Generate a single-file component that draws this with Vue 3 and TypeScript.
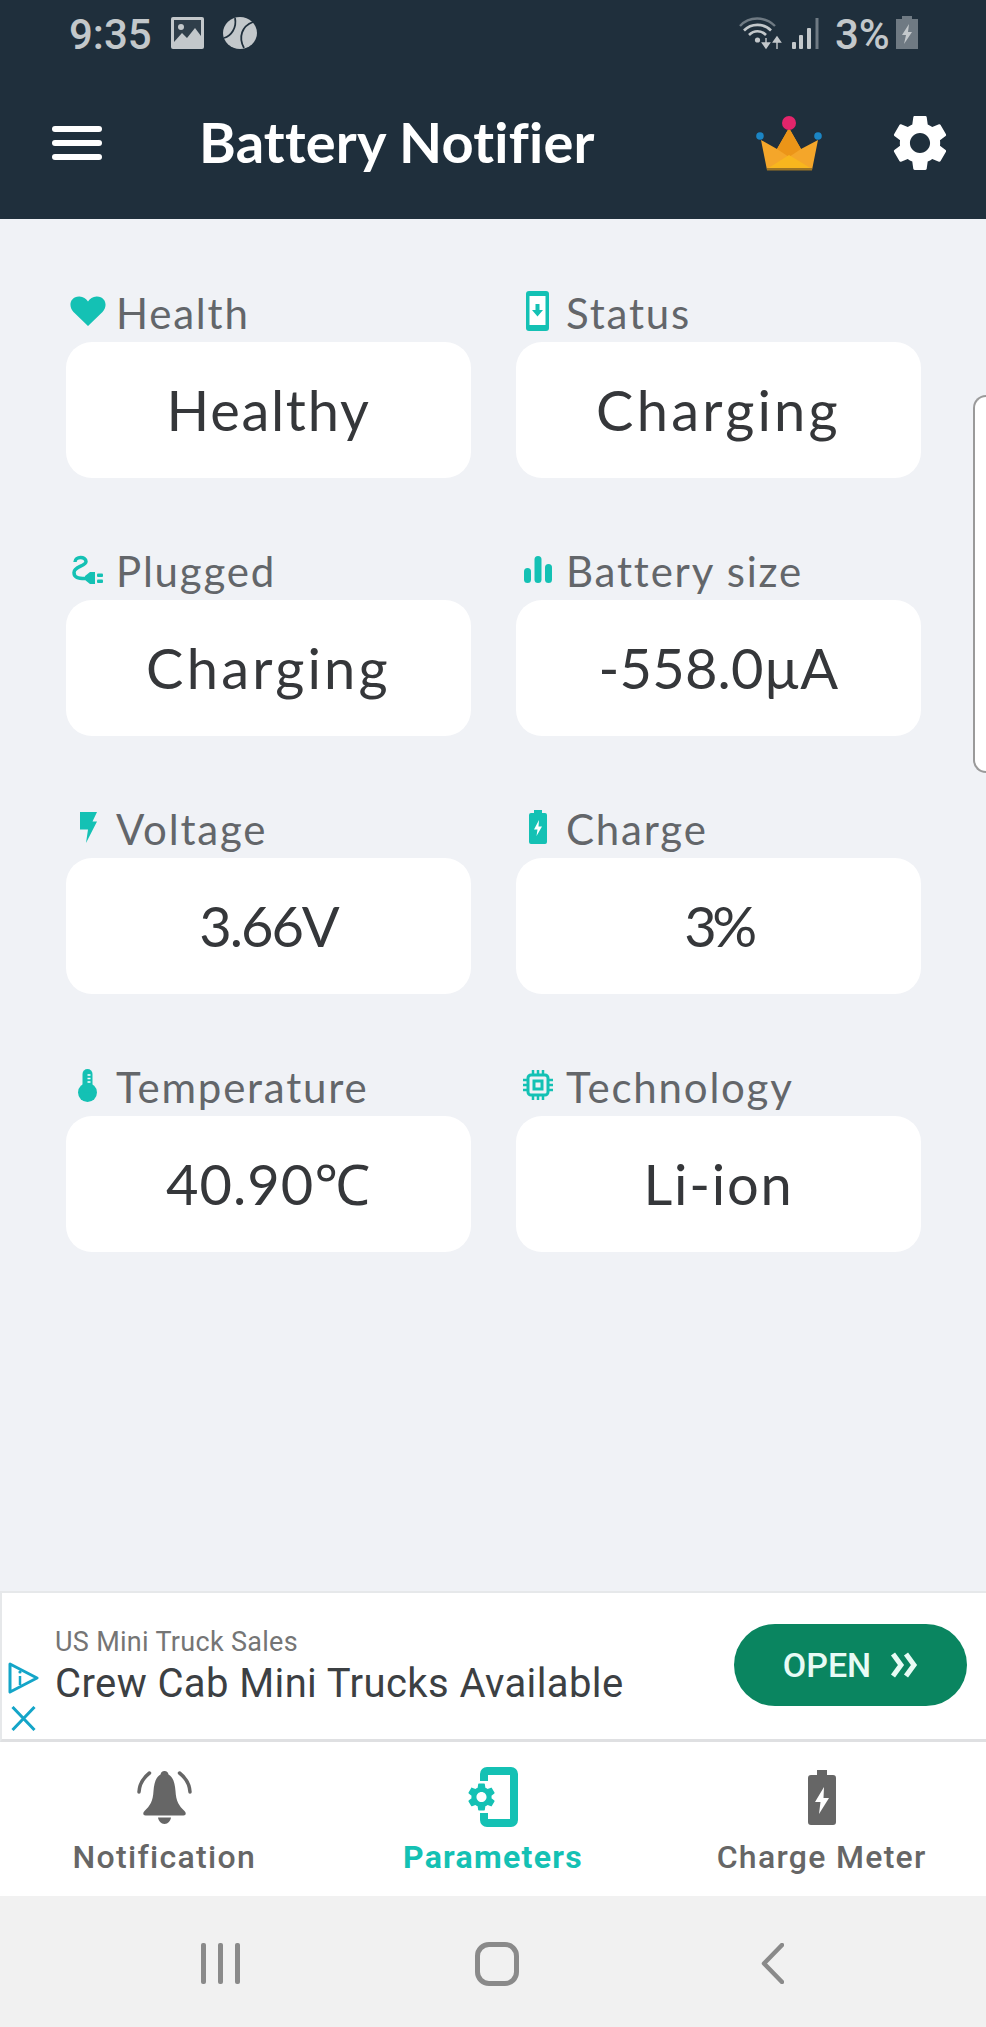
<script setup lang="ts">
interface Stat { key: string; label: string; value: string; track: number }
const stats: Stat[] = [
  { key: 'heart', label: 'Health', value: 'Healthy', track: 1.7 },
  { key: 'status', label: 'Status', value: 'Charging', track: 3.2 },
  { key: 'plug', label: 'Plugged', value: 'Charging', track: 3.2 },
  { key: 'bars', label: 'Battery size', value: '-558.0µA', track: 0.2 },
  { key: 'bolt', label: 'Voltage', value: '3.66V', track: -2 },
  { key: 'battery', label: 'Charge', value: '3%', track: -4.5 },
  { key: 'thermo', label: 'Temperature', value: '40.90℃', track: 1 },
  { key: 'chip', label: 'Technology', value: 'Li-ion', track: 1.8 },
]
const gear = 'M19.14 12.94c.04-.3.06-.61.06-.94 0-.32-.02-.64-.07-.94l2.03-1.58a.49.49 0 0 0 .12-.61l-1.92-3.32a.488.488 0 0 0-.59-.22l-2.39.96c-.5-.38-1.03-.7-1.62-.94l-.36-2.54a.484.484 0 0 0-.48-.41h-3.84c-.24 0-.43.17-.47.41l-.36 2.54c-.59.24-1.13.57-1.62.94l-2.39-.96c-.22-.08-.47 0-.59.22L2.74 8.87c-.12.21-.08.47.12.61l2.03 1.58c-.05.3-.09.63-.09.94s.02.64.07.94l-2.03 1.58a.49.49 0 0 0-.12.61l1.92 3.32c.12.22.37.29.59.22l2.39-.96c.5.38 1.03.7 1.62.94l.36 2.54c.05.24.24.41.48.41h3.84c.24 0 .44-.17.47-.41l.36-2.54c.59-.24 1.13-.56 1.62-.94l2.39.96c.22.08.47 0 .59-.22l1.92-3.32c.12-.22.07-.47-.12-.61l-2.01-1.58zM12 15.6c-1.98 0-3.6-1.62-3.6-3.6s1.62-3.6 3.6-3.6 3.6 1.62 3.6 3.6-1.62 3.6-3.6 3.6z'
</script>

<template>
  <div class="page">
    <header class="top">
      <div class="status">
        <div class="status-left">
          <span class="time">9:35</span>
          <svg class="s-img" width="33" height="32" viewBox="0 0 33 32">
            <rect width="33" height="32" rx="2" fill="#c3c8cb" />
            <path d="M3 25 L11 16 L16 21 L24 11 L30 19 V3 H3Z" fill="#1f2f3c" opacity=".9" />
            <circle cx="10" cy="10" r="3" fill="#c3c8cb" />
          </svg>
          <svg class="s-ball" width="34" height="32" viewBox="0 0 34 32">
            <ellipse cx="17" cy="16" rx="17" ry="16" fill="#c3c8cb" />
            <path d="M12 1 C14 11 8 19 1 21 M30 5 C19 9 15 20 21 31" fill="none" stroke="#1f2f3c" stroke-width="1.8" />
          </svg>
        </div>
        <div class="status-right">
          <svg class="s-wifi" width="43" height="33" viewBox="0 0 43 33">
            <path d="M1 9 C10 -1 26 -1 36 9" fill="none" stroke="#6f7a83" stroke-width="2.4" />
            <path d="M5 13.5 C12 6 25 6 32 13.5 M10 18 C15 13 22 13 27 18" fill="none" stroke="#c3c8cb" stroke-width="2.6" />
            <circle cx="18.5" cy="23" r="2.6" fill="#c3c8cb" />
            <path d="M27 21v8M23.5 26l3.5 5 3.5-5Z" fill="#c3c8cb" stroke="#c3c8cb" stroke-width="1.4" />
            <path d="M38 32v-9M34.5 25l3.5-5 3.5 5Z" fill="#c3c8cb" stroke="#c3c8cb" stroke-width="1.4" />
          </svg>
          <svg class="s-signal" width="27" height="31" viewBox="0 0 27 31">
            <rect x="0" y="24" width="4" height="7" rx="1" fill="#c3c8cb" />
            <rect x="7" y="17" width="4" height="14" rx="1" fill="#c3c8cb" />
            <rect x="15" y="10" width="4" height="21" rx="1" fill="#c3c8cb" />
            <rect x="23.5" y="0" width="3" height="31" fill="#6f7a83" />
          </svg>
          <span class="pct">3%</span>
          <svg class="s-batt" width="22" height="33" viewBox="0 0 22 33">
            <path d="M6 0H16V3H22V33H0V3H6Z" fill="#6f7a83" />
            <path d="M13 8 L6 19 H10 L8 28 L16 16 H12 Z" fill="#c3c8cb" />
          </svg>
        </div>
      </div>
      <div class="toolbar">
        <div class="burger"><i></i><i></i><i></i></div>
        <h1 class="title">Battery Notifier</h1>
        <svg class="crown" width="66" height="55" viewBox="0 0 66 55">
          <path d="M5 24 L21 33 L33 12 L45 33 L62 24 L56 54 H11Z" fill="#f4a62a" />
          <path d="M33 12 L45 33 L33 41 L21 33Z" fill="#ec9518" />
          <path d="M11 53 L33 39 L56 53Z" fill="#f8b61e" />
          <rect x="11" y="52" width="45" height="2.5" fill="#9c7424" />
          <circle cx="33" cy="7" r="7" fill="#e3256b" />
          <circle cx="4" cy="20" r="3.8" fill="#1b85c4" />
          <circle cx="62" cy="20" r="3.8" fill="#1b85c4" />
        </svg>
        <svg class="gear" width="54" height="56" viewBox="2.6 2 18.8 20"><path :d="gear" fill="#fff" /></svg>
      </div>
    </header>

    <main class="main">
      <section v-for="s in stats" :key="s.label" class="stat">
        <div class="label">
          <span class="ico">
            <svg v-if="s.key === 'heart'" width="36" height="30" viewBox="0 0 36 30"><path d="M18 30 L3.5 16 C-2 10 0 1 9 0.5 C13 0.3 16 2.5 18 5.5 C20 2.5 23 0.3 27 0.5 C36 1 38 10 32.500 16 Z" fill="#14c1b4" /></svg>
            <svg v-else-if="s.key === 'status'" width="23" height="40" viewBox="0 0 23 40"><rect width="23" height="40" rx="3" fill="#14c1b4" /><rect x="3.500" y="5" width="16" height="29" fill="#fff" /><path d="M9.500 13h4v6h3.500l-5.500 6.500-5.500-6.500h3.500z" fill="#14c1b4" /></svg>
            <svg v-else-if="s.key === 'plug'" width="32" height="29" viewBox="0 0 32 29"><path d="M3 7 C3 1 14 1 14 6.500 C14 11.500 2 11 2 17.500 C2 22.500 6 23.500 13 23.500" fill="none" stroke="#14c1b4" stroke-width="3.500" /><path d="M13 21 L18 17 H23 V29 H18 L13 25Z" fill="#14c1b4" /><rect x="25" y="18.500" width="6" height="3.500" rx="1" fill="#14c1b4" /><rect x="25" y="24.500" width="6" height="3.500" rx="1" fill="#14c1b4" /></svg>
            <svg v-else-if="s.key === 'bars'" width="28" height="27" viewBox="0 0 28 27"><rect y="12" width="7" height="15" rx="3.500" fill="#14c1b4" /><rect x="10.500" width="7" height="27" rx="3.500" fill="#14c1b4" /><rect x="21" y="8" width="7" height="19" rx="3.500" fill="#14c1b4" /></svg>
            <svg v-else-if="s.key === 'bolt'" width="18" height="31" viewBox="0 0 18 31"><path d="M1 0H18L13.500 9.500H18L7 31L9 17.500H1Z" fill="#14c1b4" /></svg>
            <svg v-else-if="s.key === 'battery'" width="18" height="34" viewBox="0 0 18 34"><path d="M5 0H13V3H16A2 2 0 0 1 18 5V32A2 2 0 0 1 16 34H2A2 2 0 0 1 0 32V5A2 2 0 0 1 2 3H5Z" fill="#14c1b4" /><path d="M10 10 L5 19.500 H8.500 L7.500 26 L13 16.500 H9.500 Z" fill="#fff" /></svg>
            <svg v-else-if="s.key === 'thermo'" width="19" height="33" viewBox="0 0 19 33"><circle cx="9.500" cy="23.500" r="9.500" fill="#14c1b4" /><rect x="4.500" width="10" height="24" rx="5" fill="#14c1b4" /><path d="M9.500 6h3M9.500 9.500h3M9.500 13h3" stroke="#fff" stroke-width="1.500" /></svg>
            <svg v-else width="30" height="30" viewBox="0 0 30 30"><rect x="5" y="5" width="20" height="20" rx="3" fill="none" stroke="#14c1b4" stroke-width="3" /><rect x="11" y="11" width="8" height="8" fill="none" stroke="#14c1b4" stroke-width="3" /><path d="M10 0v5M15 0v5M20 0v5M10 25v5M15 25v5M20 25v5M0 10h5M0 15h5M0 20h5M25 10h5M25 15h5M25 20h5" stroke="#14c1b4" stroke-width="2.500" /></svg>
          </span>
          <span class="label-text">{{ s.label }}</span>
        </div>
        <div class="card" :style="{ letterSpacing: s.track + 'px' }"><span class="card-text">{{ s.value }}</span></div>
      </section>
    </main>
    <div class="handle"></div>

    <aside class="ad">
      <div class="ad-choices">
        <svg width="31" height="32" viewBox="0 0 31 32"><path d="M2 2 L29 16 L2 30Z" fill="none" stroke="#14a5c8" stroke-width="3" stroke-linejoin="round" /><path d="M12 14v9" stroke="#14a5c8" stroke-width="2.500" /><circle cx="12" cy="10" r="1.600" fill="#14a5c8" /></svg>
        <svg width="25" height="25" viewBox="0 0 25 25"><path d="M1.500 1 L23.500 24 M23.500 1 L1.500 24" stroke="#14a5c8" stroke-width="3" /></svg>
      </div>
      <div class="ad-text">
        <div class="ad-sub">US Mini Truck Sales</div>
        <div class="ad-head">Crew Cab Mini Trucks Available</div>
      </div>
      <div class="ad-btn">
        <span>OPEN</span>
        <svg width="28" height="26" viewBox="0 0 28 26"><path d="M3 2 L11 13 L3 24 M16 2 L24 13 L16 24" fill="none" stroke="#e8fbf5" stroke-width="5" /></svg>
      </div>
    </aside>

    <nav class="tabs">
      <div class="tab">
        <span class="tab-ico">
          <svg width="55" height="53" viewBox="0 0 55 53">
            <path d="M27.500 0 C30 0 31 1.500 31.500 3.500 C36 6 38 12 38.500 20 C39 30 42 35 47.500 40 C49.500 42 49 44.500 46.500 44.500 H8.500 C6 44.500 5.500 42 7.500 40 C13 35 16 30 16.500 20 C17 12 19 6 23.500 3.500 C24 1.500 25 0 27.500 0Z" fill="#666" />
            <path d="M21 46.500 H34 C33.500 50 31 53 27.500 53 C24 53 21.500 50 21 46.500Z" fill="#666" />
            <path d="M12.500 2 C6 7 2.500 13 2 21 M42.500 2 C49 7 52.500 13 53 21" fill="none" stroke="#666" stroke-width="3.500" stroke-linecap="round" />
          </svg>
        </span>
        <span class="tab-text">Notification</span>
      </div>
      <div class="tab on">
        <span class="tab-ico">
          <svg width="50" height="60" viewBox="0 0 50 60">
            <path d="M16 14 V7 A3 3 0 0 1 19 4 H43 A3 3 0 0 1 46 7 V53 A3 3 0 0 1 43 56 H19 A3 3 0 0 1 16 53 V46" fill="none" stroke="#14c1b4" stroke-width="8" />
            <svg x="0" y="16" width="27" height="28" viewBox="2.600 2 18.800 20"><path :d="gear" fill="#14c1b4" /></svg>
          </svg>
        </span>
        <span class="tab-text">Parameters</span>
      </div>
      <div class="tab">
        <span class="tab-ico">
          <svg width="28" height="55" viewBox="0 0 28 55">
            <path d="M9 0H19V5H25A3 3 0 0 1 28 8V52A3 3 0 0 1 25 55H3A3 3 0 0 1 0 52V8A3 3 0 0 1 3 5H9Z" fill="#666" />
            <path d="M16 17 L7 32 H12.500 L11 44 L21 28 H15.500Z" fill="#fff" />
          </svg>
        </span>
        <span class="tab-text">Charge Meter</span>
      </div>
    </nav>

    <footer class="navbar">
      <div class="nav-recent"><i></i><i></i><i></i></div>
      <div class="nav-home"></div>
      <svg class="nav-back" width="23" height="41" viewBox="0 0 23 41"><path d="M21 2 L3 20.500 L21 39" fill="none" stroke="#8a8a8a" stroke-width="4.500" stroke-linecap="round" stroke-linejoin="round" /></svg>
    </footer>
  </div>
</template>

<style scoped>
.page {
  position: relative;
  width: 986px;
  height: 2027px;
  display: flex;
  flex-direction: column;
  background: #f0f2f6;
  overflow: hidden;
  font-family: Lato, "Noto Sans", sans-serif;
}
.top { height: 219px; flex: none; background: #1f2f3c; }
.status { height: 66px; display: flex; justify-content: space-between; padding: 17px 68px 0 69px; box-sizing: border-box; font-family: Roboto, sans-serif; color: #c3c8cb; }
.status-left, .status-right { display: flex; align-items: flex-start; }
.time { font-size: 42px; line-height: 36px; width: 81px; font-weight: 500; }
.pct { font-size: 42px; line-height: 36px; width: 54px; margin: 0 7px 0 16px; font-weight: 500; }
.s-img { margin-left: 21px; }
.s-ball { margin-left: 19px; }
.s-signal { margin: 1px 0 0 10px; }
.s-batt { margin-top: -1px; }
.toolbar { height: 153px; display: flex; align-items: center; padding-left: 52px; }
.burger { width: 50px; display: flex; flex-direction: column; gap: 8px; }
.burger i { display: block; height: 6px; border-radius: 3px; background: #fff; }
.title { margin: -1px 0 0 97px; width: 557px; flex: none; font-size: 56px; line-height: 60px; font-weight: 700; color: #fff; white-space: nowrap; letter-spacing: 0.2px; }
.crown { margin: 2px 0 0 0; }
.gear { margin: 0 0 0 71px; }
.main {
  flex: none;
  height: 1372px;
  box-sizing: border-box;
  display: grid;
  grid-template-columns: 405px 405px;
  grid-auto-rows: 192px;
  column-gap: 45px;
  row-gap: 66px;
  padding: 67px 0 0 66px;
  align-content: start;
}
.stat { display: flex; flex-direction: column; }
.label { height: 56px; display: flex; align-items: center; color: #63666a; }
.ico { width: 43px; height: 46px; margin-right: 7px; display: flex; align-items: center; justify-content: center; margin-top: -6px; }
.label-text { font-size: 42px; line-height: 46px; margin-top: -2px; white-space: nowrap; letter-spacing: 1.8px; }
.card { height: 136px; border-radius: 26px; background: #fff; display: flex; align-items: center; justify-content: center; font-size: 56px; color: #35373a; }
.card-text { margin-top: -2px; }
.handle { position: absolute; right: 0; top: 395px; width: 13px; height: 378px; box-sizing: border-box; background: #fff; border: 2px solid #9a9a9a; border-right: 0; border-radius: 14px 0 0 14px; }
.ad { height: 151px; flex: none; display: flex; background: #fff; box-sizing: border-box; border-top: 2px solid #e6e8ea; border-bottom: 3px solid #dfe0e2; border-left: 2px solid #e6e8ea; }
.ad-choices { width: 53px; flex: none; display: flex; flex-direction: column; padding: 69px 0 0 6px; box-sizing: border-box; gap: 12px; }
.ad-choices svg:last-child { margin-left: 3px; }
.ad-text { flex: 1; padding-top: 34px; }
.ad-sub { font-family: Roboto, sans-serif; font-size: 27px; line-height: 30px; letter-spacing: 0.3px; color: #757575; }
.ad-head { font-family: Roboto, sans-serif; font-size: 40px; line-height: 44px; letter-spacing: 0.4px; color: #3c4043; margin-top: 5px; white-space: nowrap; }
.ad-btn { width: 233px; height: 82px; margin: 31px 19px 0 0; border-radius: 41px; background: #0a8560; display: flex; align-items: center; justify-content: center; gap: 19px; color: #e8fbf5; font-family: Roboto, sans-serif; font-size: 34px; font-weight: 500; }
.tabs { height: 154px; flex: none; display: grid; grid-template-columns: repeat(3, 1fr); background: #fff; }
.tab { display: flex; flex-direction: column; align-items: center; color: #666; }
.tab-ico { height: 60px; margin-top: 25px; display: flex; align-items: center; }
.tab-text { font-family: Roboto, sans-serif; font-size: 32px; font-weight: 500; line-height: 36px; letter-spacing: 1.3px; margin-top: 12px; white-space: nowrap; }
.on { color: #14c1b4; }
.on .tab-text { font-weight: 700; }
.navbar { flex: none; height: 131px; background: #f1f1f1; display: flex; align-items: center; padding: 0 0 0 201px; box-sizing: border-box; }
.nav-recent { display: flex; gap: 12px; width: 39px; height: 41px; margin-top: 4px; }
.nav-recent i { display: block; width: 5px; height: 41px; border-radius: 2px; background: #8a8a8a; }
.nav-home { width: 44px; height: 44px; box-sizing: border-box; border: 5px solid #8a8a8a; border-radius: 14px; margin: 4px 0 0 235px; }
.nav-back { margin: 4px 0 0 242px; }
</style>
